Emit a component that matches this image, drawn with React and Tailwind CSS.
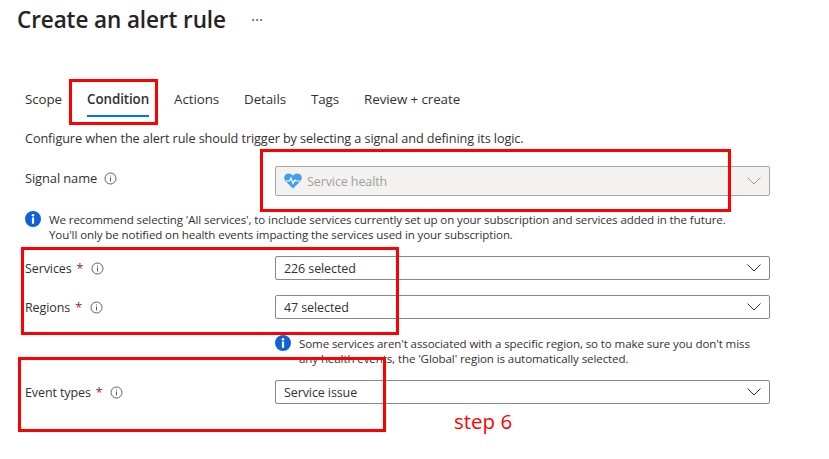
const FONT = "font-['Open_Sans','Noto_Sans',sans-serif]";

function InfoCircle() {
  return (
    <svg width="13" height="13" viewBox="0 0 13 13" className="shrink-0">
      <circle cx="6.5" cy="6.5" r="5.500" fill="none" stroke="#605e5c" strokeWidth="1" />
      <rect x="6" y="5.500" width="1" height="4" fill="#605e5c" />
      <rect x="6" y="3.500" width="1" height="1" fill="#605e5c" />
    </svg>
  );
}

function InfoBadge() {
  return (
    <svg width="16" height="16" viewBox="0 0 16 16" className="shrink-0">
      <circle cx="8" cy="8" r="8" fill="#0f62d6" />
      <rect x="6.900" y="6.500" width="2.200" height="6.200" fill="#fff" />
      <circle cx="8" cy="4.200" r="1.300" fill="#fff" />
    </svg>
  );
}

function HeartIcon() {
  return (
    <svg width="18" height="16" viewBox="0 0 18 16" className="shrink-0">
      <path d="M9 15.500 1.600 8.200C-.4 6.100-.1 3 1.800 1.500 3.800 0 6.900.3 9 2.800 11.100.3 14.200 0 16.200 1.500c1.900 1.500 2.200 4.600.2 6.700L9 15.500Z" fill="#3f9fe8" />
      <path d="M2 8h3.500l1.500-3 2 5.500 1.700-3.500 1 1H16" fill="none" stroke="#fff" strokeWidth="1.200" />
    </svg>
  );
}

function Chevron({ disabled }) {
  return (
    <svg width="14" height="8" viewBox="0 0 14 8" className="shrink-0">
      <path d="M.5.500 7 7 13.500.500" fill="none" stroke={disabled ? "#a19f9d" : "#323130"} strokeWidth="1" />
    </svg>
  );
}

function Select({ value, disabled, heightClass }) {
  return (
    <div
      className={`flex w-[495px] items-center justify-between rounded-[2px] border pl-2 pr-[8px] ${heightClass} ${
        disabled ? "border-[#a6a6a6] bg-[#f3f2f1]" : "border-[#8a8886] bg-white"
      }`}
    >
      <div className="flex items-center gap-[5px]">
        {disabled && <HeartIcon />}
        <span className={disabled ? "text-[#a19f9d]" : "text-[#323130]"}>{value}</span>
      </div>
      <Chevron disabled={disabled} />
    </div>
  );
}

function Row({ label, required, labelClass, gapClass, children, className }) {
  return (
    <div className={`flex items-center pl-[25px] ${className}`}>
      <div className={`flex w-[250px] items-center ${labelClass}`}>
        <span>{label}</span>
        {required && <span className="ml-[5px] text-[#a4262c]">*</span>}
        <span className={gapClass}>
          <InfoCircle />
        </span>
      </div>
      {children}
    </div>
  );
}

export default function App() {
  return (
    <div
      className={`relative h-[459px] w-[829px] overflow-hidden bg-white text-[12.500px] leading-[15px] tracking-[-0.1px] text-[#323130] ${FONT}`}
    >
      {/* Header */}
      <div className="flex items-center pl-[17px] pt-[5px]">
        <h1 className="text-[22.500px] leading-[30px] font-semibold tracking-[-0.1px] text-[#252423]">
          Create an alert rule
        </h1>
        <span className="ml-[25px] text-[16px] leading-[30px] text-[#605e5c]">···</span>
      </div>

      {/* Tabs */}
      <div className="mt-[57px] flex pl-[25px] text-[13.400px]">
        <span className="mr-[25px] pb-[10px]">Scope</span>
        <span className="mr-[25px] border-b-2 border-[#0078d4] pb-[8px] font-semibold">Condition</span>
        <span className="mr-[25px] pb-[10px]">Actions</span>
        <span className="mr-[25px] pb-[10px]">Details</span>
        <span className="mr-[25px] pb-[10px]">Tags</span>
        <span className="pb-[10px]">Review + create</span>
      </div>

      <p className="mt-[14px] pl-[25px] text-[12.700px]">
        Configure when the alert rule should trigger by selecting a signal and defining its logic.
      </p>

      {/* Form */}
      <Row label="Signal name" labelClass="pb-[6px] text-[12.900px]" gapClass="ml-[7px]" className="mt-[20px]">
        <Select value="Service health" disabled heightClass="h-[30px]" />
      </Row>

      <div className="mt-[15px] flex gap-2 pl-[25px]">
        <InfoBadge />
        <p className="pt-[1px] text-[11.550px]">
          We recommend selecting 'All services', to include services currently set up on your subscription and services added in the future.
          <br />
          You'll only be notified on health events impacting the services used in your subscription.
        </p>
      </div>

      <Row label="Services" required gapClass="ml-[8px]" className="mt-[14px]">
        <Select value="226 selected" heightClass="h-[24px]" />
      </Row>
      <Row label="Regions" required gapClass="ml-[8px]" className="mt-[15px]">
        <Select value="47 selected" heightClass="h-[24px]" />
      </Row>

      <div className="mt-[16px] flex gap-2 pl-[275px]">
        <InfoBadge />
        <p className="pt-[1px] text-[11.550px]">
          Some services aren't associated with a specific region, so to make sure you don't miss
          <br />
          any health events, the 'Global' region is automatically selected.
        </p>
      </div>

      <Row label="Event types" required gapClass="ml-[7px]" className="mt-[14px]">
        <Select value="Service issue" heightClass="h-[24px]" />
      </Row>

      {/* Red annotations drawn over the screenshot */}
      <div className="absolute left-[69px] top-[79px] h-[46px] w-[89px] border-[3px] border-[#ff0000]" />
      <div className="absolute left-[260px] top-[149px] h-[63px] w-[471px] border-[3px] border-[#ff0000]" />
      <div className="absolute left-[21px] top-[247px] h-[88px] w-[378px] border-[3px] border-[#ff0000]" />
      <div className="absolute left-[18px] top-[357px] h-[75px] w-[368px] border-[3px] border-[#ff0000]" />
      <span className="absolute left-[454px] top-[408px] text-[20.500px] leading-[26px] tracking-normal text-[#ff0000]">
        step 6
      </span>
    </div>
  );
}
